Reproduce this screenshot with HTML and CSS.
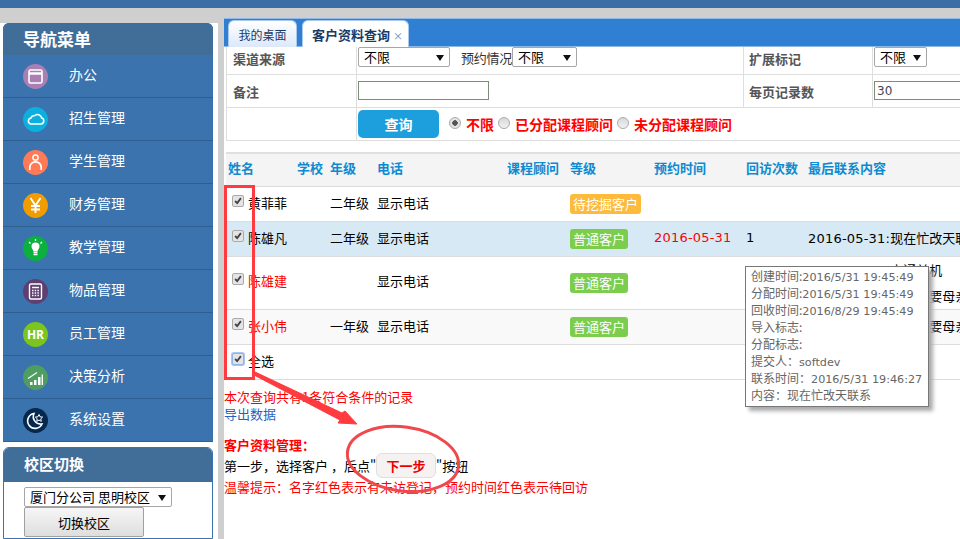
FILE: index.html
```html
<!DOCTYPE html>
<html lang="zh-CN">
<head>
<meta charset="utf-8">
<title>客户资料查询</title>
<link rel="stylesheet" href="styles.css">
</head>
<body>
<div class="page">
  <div class="topbar"></div>
  <div class="layout">
    <aside class="side">
      <section class="nav">
        <h2 class="nav-title">导航菜单</h2>
        <div class="nav-item"><span class="ico c1"><svg viewBox="0 0 25 25"><rect x="6" y="6" width="13" height="13" rx="1.5" fill="none" stroke="#fff" stroke-width="1.6"/><path d="M6 9.500h13" stroke="#fff" stroke-width="2.400"/></svg></span><span class="nav-label">办公</span></div>
        <div class="nav-item"><span class="ico c2"><svg viewBox="0 0 25 25"><path d="M7.500 17h10.500a3.200 3.200 0 0 0 .6-6.200 4.200 4.200 0 0 0-7-2 3 3 0 0 0-3.600 2.200 3.100 3.100 0 0 0-.5 6z" fill="none" stroke="#fff" stroke-width="1.500"/></svg></span><span class="nav-label">招生管理</span></div>
        <div class="nav-item"><span class="ico c3"><svg viewBox="0 0 25 25"><circle cx="12.500" cy="7.500" r="2.600" fill="none" stroke="#fff" stroke-width="1.500"/><path d="M6.800 20v-2.500a5.700 5.700 0 0 1 11.400 0V20" fill="none" stroke="#fff" stroke-width="1.700"/></svg></span><span class="nav-label">学生管理</span></div>
        <div class="nav-item"><span class="ico c4"><svg viewBox="0 0 25 25"><path d="M7.500 5l5 7.500 5-7.500M12.500 12.500V20M8 13h9M8 16.500h9" fill="none" stroke="#fff" stroke-width="1.900"/></svg></span><span class="nav-label">财务管理</span></div>
        <div class="nav-item"><span class="ico c5"><svg viewBox="0 0 25 25"><path d="M8.500 10.500a4 4 0 0 1 8 0c0 2-1.700 3-2 5h-4c-.3-2-2-3-2-5z" fill="#fff"/><path d="M10.500 16.500h4M10.500 18.500h4M12.500 3v2M6 6l1.500 1.500M19 6l-1.500 1.500" stroke="#fff" stroke-width="1.300"/></svg></span><span class="nav-label">教学管理</span></div>
        <div class="nav-item"><span class="ico c6"><svg viewBox="0 0 25 25"><rect x="6.500" y="5" width="12" height="15" rx="1.500" fill="none" stroke="#fff" stroke-width="1.400"/><path d="M9 8.500h7" stroke="#fff" stroke-width="1.500"/><path d="M9 11.500h7M9 14h7M9 16.500h7" stroke="#fff" stroke-width="1.300" stroke-dasharray="1.500 1.200"/></svg></span><span class="nav-label">物品管理</span></div>
        <div class="nav-item"><span class="ico c7 ico-text">HR</span><span class="nav-label">员工管理</span></div>
        <div class="nav-item"><span class="ico c8"><svg viewBox="0 0 25 25"><path d="M7 20v-3h2.500v3zM11 20v-5h2.500v5zM15 20v-8h2.500v8zM18.600 20V9.500H20V20z" fill="#fff"/><path d="M5 13.500L14 7.500" stroke="#fff" stroke-width="1.100"/></svg></span><span class="nav-label">决策分析</span></div>
        <div class="nav-item"><span class="ico c9"><svg viewBox="0 0 25 25"><path d="M11 5.500a7.500 7.500 0 1 0 8 10.500 7.500 7.500 0 0 1-8-10.500z" fill="none" stroke="#fff" stroke-width="1.600"/><path d="M16 6.500l1.100 2.300 2.500.3-1.800 1.700.5 2.500-2.300-1.200-2.200 1.200.4-2.500-1.800-1.700 2.500-.3z" fill="none" stroke="#fff" stroke-width="1"/></svg></span><span class="nav-label">系统设置</span></div>
      </section>
      <section class="campus">
        <h3 class="campus-title">校区切换</h3>
        <div class="campus-body">
          <span class="sel sel-campus">厦门分公司 思明校区<i class="arrow"></i></span>
          <button class="campus-btn" type="button">切换校区</button>
        </div>
      </section>
    </aside>
    <main class="main">
      <div class="tabs">
        <span class="tab tab-off">我的桌面</span>
        <span class="tab tab-on">客户资料查询<em class="tab-x">×</em></span>
      </div>
      <div class="content">
        <table class="filter">
          <colgroup><col class="f1"><col class="f2"><col class="f3"><col class="f4"></colgroup>
          <tr class="fr1">
            <th>渠道来源</th>
            <td class="sel-cell"><div class="sel-row"><span class="sel sel-a">不限<i class="arrow"></i></span><span class="book-label">预约情况</span><span class="sel sel-b">不限<i class="arrow"></i></span></div></td>
            <th class="th-pad">扩展标记</th>
            <td class="sel-cell"><span class="sel sel-c">不限<i class="arrow"></i></span></td>
          </tr>
          <tr class="fr2">
            <th>备注</th>
            <td><span class="inp inp-a"></span></td>
            <th class="th-pad">每页记录数</th>
            <td><span class="inp inp-b">30</span></td>
          </tr>
          <tr class="fr3">
            <th></th>
            <td colspan="3"><div class="query-row">
              <button class="query" type="button">查询</button>
              <i class="radio radio-on"></i><b class="rl">不限</b>
              <i class="radio"></i><b class="rl">已分配课程顾问</b>
              <i class="radio"></i><b class="rl">未分配课程顾问</b>
            </div></td>
          </tr>
        </table>
        <table class="list">
          <colgroup><col class="c-name"><col class="c-school"><col class="c-grade"><col class="c-phone"><col class="c-adv"><col class="c-level"><col class="c-book"><col class="c-visit"><col class="c-last"></colgroup>
          <tr class="head"><th class="first">姓名</th><th>学校</th><th>年级</th><th>电话</th><th>课程顾问</th><th>等级</th><th>预约时间</th><th>回访次数</th><th>最后联系内容</th></tr>
          <tr class="r35"><td class="first"><span class="nm"><i class="chk"><svg viewBox="0 0 12 12"><path d="M2.500 6l2.500 2.500 4.500-6" fill="none" stroke="#444" stroke-width="2.200"/></svg></i>黄菲菲</span></td><td></td><td>二年级</td><td>显示电话</td><td></td><td class="lv"><span class="badge orange">待挖掘客户</span></td><td></td><td></td><td></td></tr>
          <tr class="r35 hl"><td class="first"><span class="nm"><i class="chk"><svg viewBox="0 0 12 12"><path d="M2.500 6l2.500 2.500 4.500-6" fill="none" stroke="#444" stroke-width="2.200"/></svg></i>陈雄凡</span></td><td></td><td>二年级</td><td>显示电话</td><td></td><td class="lv"><span class="badge green">普通客户</span></td><td class="num red">2016-05-31</td><td class="num">1</td><td class="last"><span class="num">2016-05-31:</span>现在忙改天联系</td></tr>
          <tr class="r52"><td class="first"><span class="nm red"><i class="chk"><svg viewBox="0 0 12 12"><path d="M2.500 6l2.500 2.500 4.500-6" fill="none" stroke="#444" stroke-width="2.200"/></svg></i>陈雄建</span></td><td></td><td></td><td>显示电话</td><td></td><td class="lv"><span class="badge green">普通客户</span></td><td></td><td></td><td class="last two"><div><span class="num">2016-05-31:</span>占通关机</div><div><span class="num">2016-05-31:</span>考虑，要母亲</div></td></tr>
          <tr class="r35 alt"><td class="first"><span class="nm red"><i class="chk"><svg viewBox="0 0 12 12"><path d="M2.500 6l2.500 2.500 4.500-6" fill="none" stroke="#444" stroke-width="2.200"/></svg></i>张小伟</span></td><td></td><td>一年级</td><td>显示电话</td><td></td><td class="lv"><span class="badge green">普通客户</span></td><td></td><td></td><td class="last"><span class="num">2016-05-31:</span>考虑，要母亲</td></tr>
          <tr class="r35"><td class="first" colspan="9"><span class="nm"><i class="chk chk-focus"><svg viewBox="0 0 12 12"><path d="M2.500 6l2.500 2.500 4.500-6" fill="none" stroke="#444" stroke-width="2.200"/></svg></i>全选</span></td></tr>
        </table>
        <div class="notes">
          <p class="red n1">本次查询共有1条符合条件的记录</p>
          <p class="n2"><a class="export">导出数据</a></p>
          <p class="red n3"><b>客户资料管理：</b></p>
          <p class="n4">第一步，选择客户 ，后点"<span class="next">下一步</span>"按钮</p>
          <p class="red n5">温馨提示：名字红色表示有未访登记，预约时间红色表示待回访</p>
        </div>
      </div>
    </main>
  </div>
  <div class="tip">
    <div class="tl">创建时间:<span class="v">2016/5/31 19:45:49</span></div>
    <div class="tl">分配时间:<span class="v">2016/5/31 19:45:49</span></div>
    <div class="tl">回收时间:<span class="v">2016/8/29 19:45:49</span></div>
    <div class="tl">导入标志:</div>
    <div class="tl">分配标志:</div>
    <div class="tl">提交人：<span class="v">softdev</span></div>
    <div class="tl">联系时间：<span class="v">2016/5/31 19:46:27</span></div>
    <div class="tl">内容：现在忙改天联系</div>
  </div>
  <svg class="marks" viewBox="0 0 960 539" aria-hidden="true">
    <rect x="225.500" y="186.500" width="28" height="192" fill="none" stroke="#ff3b3f" stroke-width="3"/>
    <path d="M255 372L342 413L345 411L357 424L338 423L340 420L254 375z" fill="#ff3b3f" stroke="#ff3b3f" stroke-width="1"/>
    <ellipse cx="403" cy="459" rx="56" ry="32" transform="rotate(8 403 459)" fill="none" stroke="#f0484c" stroke-width="3"/>
  </svg>
</div>
</body>
</html>
```
FILE: styles.css
```css
* { box-sizing: border-box; }
html, body { margin: 0; padding: 0; }
body { font-family: "Noto Sans CJK SC", "Liberation Sans", sans-serif; font-size: 13px; color: #000; }
.page { position: relative; width: 960px; height: 539px; overflow: hidden; background: #cfcfcf; }
.topbar { height: 8px; background: #3b6ea5; }
.layout { display: flex; padding-top: 10px; height: 531px; }

.side { width: 218px; margin-top: 5px; padding-left: 3px; padding-right: 5px; background: #fff; overflow: hidden; }
.nav { background: #3a73ad; border-radius: 6px 6px 0 0; overflow: hidden; }
.nav-title { margin: 0; height: 32px; padding-left: 20px; background: #416d99; color: #fff; font-size: 17px; line-height: 32px; font-weight: 700; }
.nav-item { display: flex; align-items: center; height: 43px; gap: 21px; padding-left: 20px; color: #fff; font-size: 14px; border-bottom: 1px solid #2f5f91; }
.nav-label { margin-bottom: 5px; }
.ico { width: 25px; height: 25px; border-radius: 50%; flex: none; display: block; }
.ico svg { display: block; width: 25px; height: 25px; }
.ico-text { color: #fff; font: 700 12px/25px "Open Sans", "Liberation Sans", sans-serif; text-align: center; }
.c1 { background: #a97fb4; }
.c2 { background: #0cb0df; }
.c3 { background: #ff7b57; }
.c4 { background: #f19c00; }
.c5 { background: #0bb03f; }
.c6 { background: #5f3f70; }
.c7 { background: #7cc51f; }
.c8 { background: #4e9d61; }
.c9 { background: #05284f; }

.campus { margin-top: 5px; height: 92px; border: 1px solid #3a73ad; border-radius: 6px 6px 0 0; overflow: hidden; }
.campus-title { margin: -1px -1px 0; height: 35px; padding-left: 21px; background: #416d99; color: #fff; font-size: 15px; line-height: 33px; font-weight: 700; }
.campus-body { padding: 5px 0 0 20px; }
.sel { position: relative; display: block; height: 20px; border: 1px solid #a6a6a6; border-radius: 2px; background: #fff; font-size: 13px; line-height: 18px; padding-left: 5px; color: #000; }
.arrow { position: absolute; right: 5px; top: 7px; width: 0; height: 0; border: 4px solid transparent; border-top: 6px solid #111; border-bottom: 0; }
.sel-campus { width: 148px; }
.campus-btn { display: block; width: 120px; height: 30px; padding: 0; border: 1px solid #a0a0a0; border-radius: 2px; background: linear-gradient(#f6f6f6, #dedede); font: 13px "Noto Sans CJK SC", sans-serif; color: #000; }

.main { width: 736px; margin-left: 6px; background: #fff; }
.tabs { display: flex; align-items: flex-end; gap: 5px; height: 29px; padding-left: 4px; background: #2f7fd2; border-top: 1px solid #8fb8e6; border-bottom: 1px solid #8fb8e6; }
.tab { height: 27px; margin-bottom: -1px; border: 1px solid #a9c9ee; border-bottom: 0; border-radius: 6px 6px 0 0; line-height: 27px; color: #1a3a66; white-space: nowrap; }
.tab-off { width: 69px; background: linear-gradient(#fff, #dce8f9); text-align: center; font-size: 12px; }
.tab-on { width: 107px; padding-left: 9px; background: #fff; font-weight: 700; }
.tab-x { font-style: normal; font-weight: 400; font-size: 10px; color: #6f86a8; margin-left: 3px; }

.content { padding-left: 2px; }
table { border-collapse: collapse; table-layout: fixed; border-spacing: 0; }
.filter { width: 734px; }
.f1 { width: 130px; } .f2 { width: 387px; } .f3 { width: 129px; } .f4 { width: 88px; }
.filter th, .filter td { border: 1px solid #dedede; border-top: 0; padding: 0 0 0 1px; text-align: left; vertical-align: middle; white-space: nowrap; overflow: hidden; }
.filter th { padding-left: 6px; color: #555; font-weight: 700; }
.filter .th-pad { padding-left: 5px; }
.fr1 th { padding-bottom: 3px; }
.fr2 th { padding-top: 2px; }
.fr1 { height: 27px; } .fr2 { height: 33px; } .fr3 { height: 33px; }
.fr1 .sel-cell { vertical-align: top; }
.sel-row { display: flex; align-items: flex-start; }
.sel-a { width: 92px; }
.sel-b { width: 65px; }
.sel-c { width: 53px; }
.book-label { margin: 0 0 0 11px; width: 51px; line-height: 21px; color: #333; letter-spacing: -.25px; white-space: nowrap; }
.inp { display: block; height: 19px; border: 1px solid #7f8c7a; background: #fff; padding-left: 2px; line-height: 18px; color: #445; font-family: "DejaVu Sans", sans-serif; font-size: 12px; }
.inp-a { width: 131px; }
.inp-b { width: 120px; margin-right: -40px; }
.query-row { display: flex; align-items: center; }
.query { width: 81px; height: 28px; padding: 0; border: 0; border-radius: 5px; background: #1d9fdd; color: #fff; font: 700 14px "Noto Sans CJK SC", sans-serif; margin-right: 10px; }
.radio { width: 12px; height: 12px; margin: 0 5px 2px 0; border: 1px solid #aaa; border-radius: 50%; background: linear-gradient(#d8d8d8, #f2f2f2); flex: none; }
.radio-on { background: radial-gradient(circle, #555 0 2.500px, #e4e4e4 3px); }
.rl { color: #f00; font-weight: 700; font-size: 14px; margin-right: 4px; }

.list { width: 734px; margin-top: 11px; border-top: 2px solid #e0e0e0; }
.c-name { width: 71px; } .c-school { width: 33px; } .c-grade { width: 47px; } .c-phone { width: 130px; } .c-adv { width: 63px; }
.c-level { width: 84px; } .c-book { width: 92px; } .c-visit { width: 62px; } .c-last { width: 152px; }
.list th, .list td { padding: 0 0 4px; text-align: left; white-space: nowrap; overflow: hidden; border-bottom: 1px solid #dcdcdc; }
.list .first { padding-left: 2px; }
.list .lv { padding-bottom: 0; }
.head { height: 34px; background: #f4f4f4; }
.list .head th { color: #0e8bd0; font-weight: 700; padding-bottom: 5px; }
.r35 { height: 35px; }
.r52 { height: 53px; }
.r52 td { padding-bottom: 6px; }
.hl { background: #d7e9f4; }
.alt { background: #f9f9f9; }
.nm { display: flex; align-items: center; }
.chk { display: block; width: 12px; height: 12px; margin: -2px 4px 0 4px; border: 1px solid #aaa; border-radius: 2px; background: #e4e4e4; flex: none; }
.chk svg { display: block; width: 10px; height: 10px; }
.chk-focus { border-color: #8db4ec; box-shadow: 0 0 0 1px #a9c6f2; }
.red { color: #f00; }
.num { font-family: "DejaVu Sans", sans-serif; letter-spacing: .2px; }
.badge { display: block; width: max-content; height: 20px; padding: 0 3px; border-radius: 3px; color: #fff; line-height: 19px; }
.orange { background: #fdba3b; }
.green { background: #7ccd4e; }
.last { overflow: visible; }
.list .two { padding-bottom: 0; }
.two div { height: 26px; line-height: 26px; overflow: hidden; }

.notes p { margin: 0 0 0 -2px; line-height: 17px; }
.n1 { padding-top: 8px; }
.export { color: #2a60c0; }
.notes .n3 { margin-top: 14px; }
.notes .n4 { height: 26px; line-height: 26px; margin-top: 0; white-space: nowrap; }
.next { display: inline-block; width: 60px; height: 25px; border: 1px solid #e2dede; border-radius: 6px; background: #f6f2f2; color: #e00; font-weight: 700; text-align: center; line-height: 23px; vertical-align: top; }
.notes .n5 { margin-top: -1px; }

.tip { position: absolute; left: 745px; top: 266px; width: 184px; height: 141px; padding: 0 0 0 5px; background: #fff; border: 1px solid #777; box-shadow: 4px 4px 4px #aaa; color: #666; font-size: 12px; white-space: nowrap; }
.tl { height: 17px; line-height: 17px; }
.v { font-family: "DejaVu Sans", sans-serif; font-size: 11.200px; }
.marks { position: absolute; left: 0; top: 0; width: 960px; height: 539px; pointer-events: none; }
```
